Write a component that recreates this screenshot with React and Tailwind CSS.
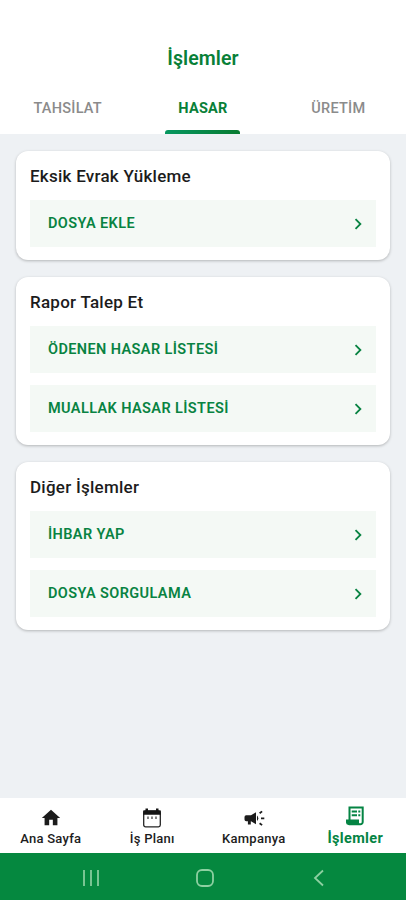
import { MdChevronRight, MdHome } from 'react-icons/md';

const tabs = ['TAHSİLAT', 'HASAR', 'ÜRETİM'];

const sections = [
  { title: 'Eksik Evrak Yükleme', items: ['DOSYA EKLE'] },
  { title: 'Rapor Talep Et', items: ['ÖDENEN HASAR LİSTESİ', 'MUALLAK HASAR LİSTESİ'] },
  { title: 'Diğer İşlemler', items: ['İHBAR YAP', 'DOSYA SORGULAMA'] },
];

const CalendarIcon = () => (
  <svg width="20" height="20" viewBox="0 0 20 20" fill="none">
    <rect x="1.7" y="3" width="16.6" height="15.8" rx="1.8" stroke="#252525" strokeWidth="1.3" />
    <path d="M1.2 2.5h17.6v4.3H1.2zM3.5 0.5H6v3H3.5zM14 0.5h2.5v3H14z" fill="#151515" />
    <path d="M6 8.5V11M10 8.5V11M14 8.5V11" stroke="#444" strokeWidth="1.3" />
  </svg>
);

const MegaphoneIcon = () => (
  <svg width="22" height="20" viewBox="0 0 22 20" fill="none">
    <path d="M3.2 7.3H8l5-3v12l-5-3H7.8v3.2H4.9v-3.2H3.2a1.700 1.700 0 0 1-1.700-1.700V9a1.700 1.700 0 0 1 1.700-1.700z" fill="#1c1c1c" />
    <path d="M14 7.600a3.500 3.500 0 0 1 0 5.400z" fill="#1c1c1c" />
    <path d="m16.600 5.300 2.500-1.900M18 10.300h3.300M16.600 15.200l2.500 1.900" stroke="#1c1c1c" strokeWidth="1.800" />
  </svg>
);

const ReceiptIcon = () => (
  <svg width="20" height="20" viewBox="0 0 20 20" fill="none">
    <path d="M4.5 14V1.5h13.200V16a2.300 2.300 0 0 1-2.300 2.300H3.800" stroke="#048443" strokeWidth="2" />
    <path d="M1 13.500h13v3.200c0 1 .6 1.700 1.500 2.200H3.400A2.400 2.400 0 0 1 1 16.500z" fill="#048443" />
    <path d="M6.700 5.500h5.300M13.300 5.500h2M6.700 9.200h5.300M13.300 9.200h2" stroke="#048443" strokeWidth="2" />
  </svg>
);

const navItems = [
  { label: 'Ana Sayfa', icon: <MdHome size={22} /> },
  { label: 'İş Planı', icon: <CalendarIcon /> },
  { label: 'Kampanya', icon: <MegaphoneIcon /> },
  { label: 'İşlemler', icon: <ReceiptIcon />, active: true },
];

const Header = () => (
  <header className="h-[134px] bg-white pt-[46px]">
    <h1 className="text-center text-[19.5px] leading-[25px] font-semibold tracking-[0.1px] text-[#088038]">İşlemler</h1>
    <nav className="grid h-[63px] grid-cols-3">
      {tabs.map((tab) => (
        <button
          key={tab}
          className={`flex flex-col items-center justify-between pt-[28px] text-[14.5px] leading-5 ${
            tab === 'HASAR' ? 'font-bold text-[#088038]' : 'font-medium text-[#8b8b8b]'
          }`}
        >
          <span className="tracking-[0.25px]">{tab}</span>
          {tab === 'HASAR' && (
            <span className="h-1 w-[75px] rounded-t-[3px] bg-linear-to-r from-[#079760] to-[#087b30]" />
          )}
        </button>
      ))}
    </nav>
  </header>
);

const Section = ({ title, items }) => (
  <section className="rounded-[12px] bg-white px-[14px] pt-[13px] pb-[13px] shadow-[0_1px_3px_rgba(0,0,0,0.25)]">
    <h2 className="pb-3 text-[17px] leading-6 font-medium tracking-[0.25px] text-[#1c1c1c]">{title}</h2>
    <div className="flex flex-col gap-3">
      {items.map((item) => (
        <button
          key={item}
          className="flex h-[47px] items-center justify-between bg-[#f4f9f5] pr-[7px] pl-[18px] text-[14.5px] font-semibold text-[#088342]"
        >
          <span className="tracking-[0.4px]">{item}</span>
          <MdChevronRight size={22} />
        </button>
      ))}
    </div>
  </section>
);

const BottomNav = () => (
  <nav className="grid h-[55px] grid-cols-4 bg-white">
    {navItems.map(({ label, icon, active }) => (
      <div
        key={label}
        className={`flex flex-col items-center ${
          active ? 'pt-[8px] text-[14.5px] font-bold text-[#048443]' : 'pt-[10px] text-[13px] font-medium text-[#1c1c1c]'
        }`}
      >
        <div className="flex h-5 items-center justify-center">{icon}</div>
        <span className={active ? 'leading-[26px] tracking-[0.35px]' : 'leading-[22px] tracking-[0.25px]'}>{label}</span>
      </div>
    ))}
  </nav>
);

const SystemBar = () => (
  <div className="flex h-[47px] items-center bg-[#05883f] pt-[3px] pl-[82px] text-[#8dd0a1]">
    <svg width="18" height="18" viewBox="0 0 18 18" stroke="currentColor" strokeWidth="1.7">
      <path d="M2 1v16M9 1v16M16 1v16" />
    </svg>
    <svg className="ml-[95px]" width="20" height="20" viewBox="0 0 20 20" fill="none" stroke="currentColor" strokeWidth="1.8">
      <rect x="2" y="2" width="16" height="16" rx="5" />
    </svg>
    <svg className="ml-[95px]" width="18" height="18" viewBox="0 0 18 18" fill="none" stroke="currentColor" strokeWidth="1.8">
      <path d="M13 1.500 5 9l8 7.500" />
    </svg>
  </div>
);

const App = () => {
  return (
    <div className="flex h-[900px] w-[406px] flex-col bg-[#eef1f4] font-[Roboto,sans-serif]">
      <Header />
      <main className="flex flex-1 flex-col gap-[17px] px-4 pt-[17px]">
        {sections.map((section) => (
          <Section key={section.title} {...section} />
        ))}
      </main>
      <BottomNav />
      <SystemBar />
    </div>
  );
};

export default App;
